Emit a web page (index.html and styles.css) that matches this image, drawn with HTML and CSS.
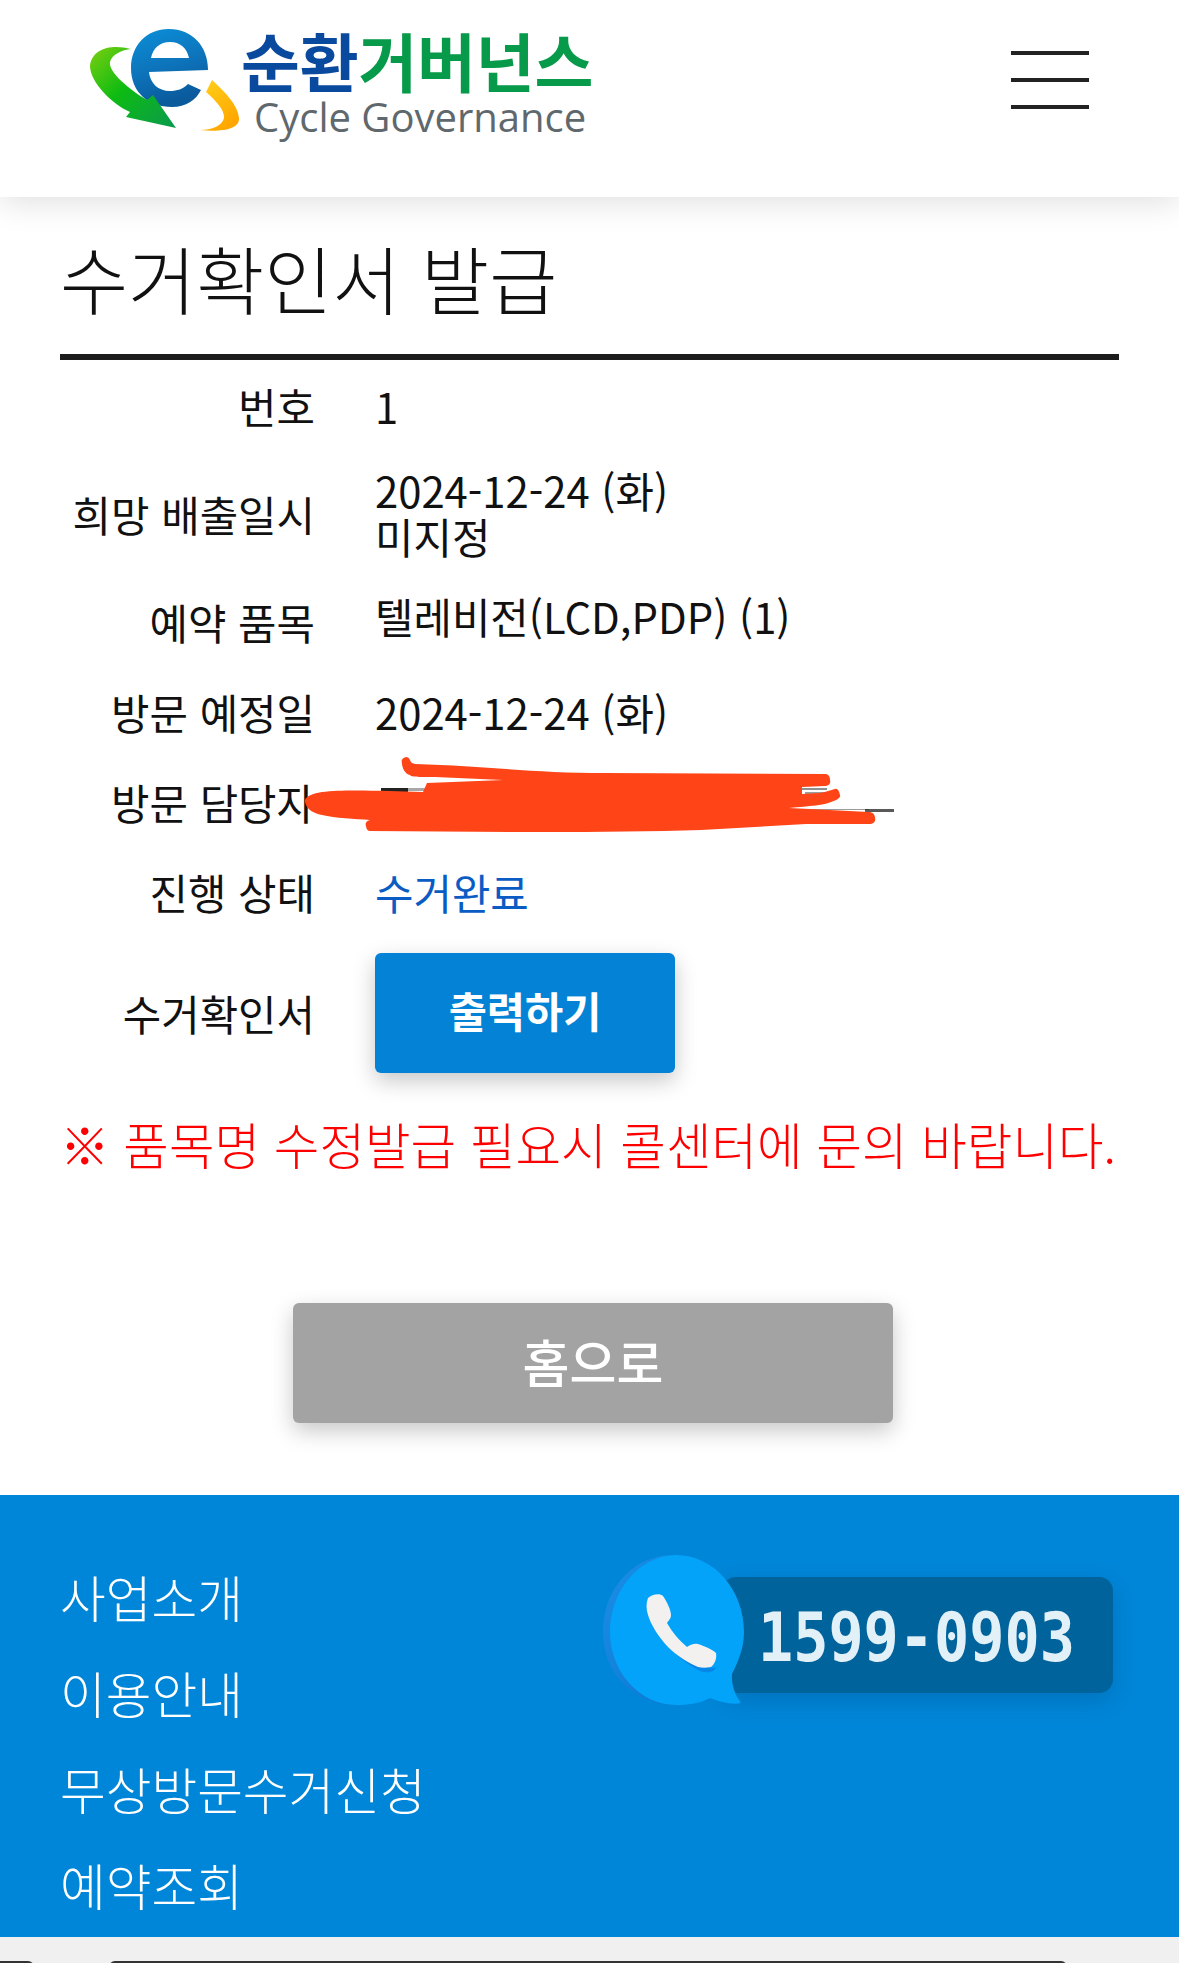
FILE: index.html
```html
<!DOCTYPE html>
<html lang="ko">
<head>
<meta charset="utf-8">
<title>수거확인서 발급</title>
<link rel="stylesheet" href="styles.css">
</head>
<body>
<header class="site-header">
  <div class="logo">
    <svg class="logo-mark" viewBox="85 25 160 110" width="160" height="110" aria-hidden="true">
      <defs>
        <linearGradient id="eBlue" x1="0" y1="0" x2="0.3" y2="1"><stop offset="0" stop-color="#0a8fd8"/><stop offset="0.55" stop-color="#0d74bb"/><stop offset="1" stop-color="#0a5a9c"/></linearGradient>
        <linearGradient id="arrowGreen" x1="0" y1="0" x2="1" y2="1"><stop offset="0" stop-color="#7ccf10"/><stop offset="0.45" stop-color="#0dbb12"/><stop offset="1" stop-color="#0b9a4e"/></linearGradient>
        <linearGradient id="arcYellow" x1="0" y1="0" x2="0.6" y2="1"><stop offset="0" stop-color="#ffd21a"/><stop offset="1" stop-color="#ffa600"/></linearGradient>
      </defs>
      <path fill="url(#eBlue)" fill-rule="evenodd" d="M208 70C208 46 192 29 169 29C146 29 131 46 131 68C131 92 148 107 172 107C186 107 196 100 201 90L188 84C183 89 177 91 170 91C158 91 150 83 149 72ZM151 58C153 48 160 42 170 42C180 42 187 48 189 58Z"/>
      <path fill="url(#arrowGreen)" d="M131 49C112 44 92 48 90 66C90 82 112 104 130 112L126 117L176 128L153 95L147 100C130 90 108 72 110 62C112 54 122 50 131 49Z"/>
      <path fill="url(#arcYellow)" d="M212 80C225 92 238 105 239 118C240 130 220 132 200 130C212 130 222 126 224 118C225 110 215 100 206 92Z"/>
    </svg>
    <div class="logo-text">
      <div class="logo-ko"><span class="logo-blue">순환</span><span class="logo-green">거버넌스</span></div>
      <div class="logo-en">Cycle Governance</div>
    </div>
  </div>
  <button class="menu-btn" aria-label="메뉴"><span></span><span></span><span></span></button>
</header>

<main class="content">
  <h1 class="page-title">수거확인서 발급</h1>
  <div class="details">
    <div class="row"><div class="label">번호</div><div class="value">1</div></div>
    <div class="row row-tall"><div class="label">희망 배출일시</div><div class="value value-tall">2024-12-24 (화)<br>미지정</div></div>
    <div class="row row-item"><div class="label">예약 품목</div><div class="value value-up">텔레비전(LCD,PDP) (1)</div></div>
    <div class="row"><div class="label">방문 예정일</div><div class="value">2024-12-24 (화)</div></div>
    <div class="row"><div class="label">방문 담당자</div><div class="value"></div></div>
    <div class="row"><div class="label">진행 상태</div><div class="value status">수거완료</div></div>
    <div class="row row-button"><div class="label">수거확인서</div><div class="value"><button class="print-btn">출력하기</button></div></div>
    <svg class="scribble" viewBox="0 0 620 90" width="620" height="90" aria-hidden="true">
      <g fill="#222">
        <rect x="76" y="38" width="27" height="4"/>
        <rect x="103" y="38" width="17" height="3" opacity=".4"/>
        <rect x="497" y="38" width="25" height="2" opacity=".5"/>
        <rect x="500" y="42" width="24" height="2" opacity=".45"/>
        <rect x="484" y="59" width="80" height="1" opacity=".45"/>
        <rect x="560" y="59" width="29" height="3" opacity=".75"/>
      </g>
      <path fill="#ff4517" d="M101 7C97 8 96 11 97 13C97 18 100 24 105 25C106 27 112 27 130 27L198 30L122 33L118 42C80 41 40 39 17 42C4 44 -1 48 0 52C2 60 8 63 17 65C30 68 50 69 65 70C61 71 60 74 61 76C61 79 63 81 65 81C180 82 300 83 396 80L501 74L564 74C569 74 571 71 570 68C570 64 567 62 564 62L484 58C505 56 520 55 526 52C533 50 536 47 535 45C534 40 532 38 530 39C525 40 522 42 515 43L497 44L497 37L520 36C524 36 526 33 525 30C525 26 523 24 520 24L300 23C227 23 180 16 110 14C106 13 106 12 105 10C104 8 103 7 101 7Z"/>
    </svg>
  </div>
  <p class="notice">※ 품목명 수정발급 필요시 콜센터에 문의 바랍니다.</p>
  <div class="home-wrap"><button class="home-btn">홈으로</button></div>
</main>

<footer class="site-footer">
  <nav class="footer-links">
    <a>사업소개</a>
    <a>이용안내</a>
    <a>무상방문수거신청</a>
    <a>예약조회</a>
  </nav>
  <div class="call">
    <div class="call-bar"><span class="call-number">1599-0903</span></div>
    <svg class="call-bubble" viewBox="600 1552 148 156" width="148" height="156" aria-hidden="true">
      <defs>
        <linearGradient id="rim" x1="0" y1="0" x2="1" y2="1"><stop offset="0" stop-color="#1b8fe6"/><stop offset="1" stop-color="#0a74d0"/></linearGradient>
      </defs>
      <path fill="url(#rim)" d="M672 1555C636 1555 603 1586 603 1632C603 1676 636 1705 676 1705C690 1705 700 1700 708 1697Z"/>
      <path fill="#03a3fa" d="M676 1555C714 1555 744 1590 744 1632C744 1648 738 1662 732 1674C731 1686 736 1696 741 1703C732 1705 720 1702 710 1698C698 1704 688 1705 676 1705C640 1705 610 1672 610 1632C610 1590 640 1555 676 1555Z"/>
      <path fill="#0a6fd6" opacity=".55" d="M650 1606C652 1628 668 1654 700 1671C708 1674 716 1672 718 1664L716 1668C700 1668 662 1650 650 1606Z"/>
      <path fill="#f2f1f0" d="M648 1598C652 1594 660 1593 663 1596C667 1602 671 1610 671 1615C671 1619 668 1621 667 1623C672 1632 680 1641 687 1647C690 1645 694 1643 698 1644C704 1646 712 1649 716 1653C717 1658 715 1664 711 1667C706 1668 702 1668 698 1667C688 1663 676 1655 668 1647C658 1636 651 1625 648 1615C646 1609 646 1603 648 1598Z"/>
    </svg>
  </div>
</footer>

<div class="bottom-strip"><span class="pill pill-left"></span><span class="pill pill-main"></span></div>
</body>
</html>
```

FILE: styles.css
```css
* { box-sizing: border-box; }
html, body { margin: 0; padding: 0; }
body {
  width: 1179px;
  height: 1963px;
  overflow: hidden;
  background: #fff;
  color: #111;
  font-family: "Noto Sans CJK KR", "Noto Sans", sans-serif;
}

.site-header {
  height: 197px;
  display: flex;
  justify-content: space-between;
  align-items: flex-start;
  padding: 25px 90px 0 85px;
  background: #fff;
  box-shadow: 0 6px 30px rgba(0,0,0,.12);
  position: relative;
}
.logo { display: flex; align-items: flex-start; }
.logo-mark { display: block; flex: none; }
.logo-text { margin-left: -4px; margin-top: -2px; }
.logo-ko {
  font-size: 64px;
  font-weight: 700;
  line-height: 72px;
  white-space: nowrap;
  letter-spacing: -.2px;
}
.logo-blue { color: #0a4a9e; }
.logo-green { color: #079a4a; }
.logo-en {
  font-family: "Open Sans", sans-serif;
  color: #5f686c;
  font-size: 40px;
  line-height: 44px;
  margin-left: 13px;
  white-space: nowrap;
}
.menu-btn {
  width: 78px;
  height: 58px;
  margin-top: 26px;
  padding: 0;
  border: 0;
  background: none;
  display: flex;
  flex-direction: column;
  justify-content: space-between;
}
.menu-btn span { display: block; height: 4px; background: #222; }

.content { padding: 0 60px; }
.page-title {
  margin: 0;
  height: 163px;
  padding-top: 25px;
  font-size: 74px;
  line-height: 110px;
  font-weight: 300;
  color: #111;
  border-bottom: 6px solid #1c1c1c;
  white-space: nowrap;
}
.details { position: relative; padding-top: 1px; }
.row {
  display: grid;
  grid-template-columns: 255px 1fr;
  column-gap: 60px;
  align-items: center;
  min-height: 90px;
  font-size: 41.8px;
  line-height: 46px;
}
.row-tall { min-height: 126px; }
.row-item { min-height: 90px; }
.row-button { min-height: 151px; }
.label { text-align: right; white-space: nowrap; }
.value { white-space: nowrap; }
.value-tall { margin-top: -2px; }
.value-up { margin-top: -12px; }
.status { color: #0a5cc4; }
.print-btn {
  display: block;
  width: 300px;
  height: 120px;
  padding: 0 0 6px;
  border: 0;
  border-radius: 6px;
  background: #0382d6;
  color: #fff;
  font: 700 41.5px "Noto Sans CJK KR", sans-serif;
  box-shadow: 0 8px 22px rgba(0,0,0,.22);
}
.scribble { position: absolute; left: 245px; top: 390px; }

.notice {
  margin: 11px 0 0;
  font-size: 49.5px;
  line-height: 90px;
  color: #f00;
  white-space: nowrap;
  font-weight: 300;
}
.home-wrap { display: flex; justify-content: center; margin-top: 114px; }
.home-btn {
  width: 600px;
  height: 120px;
  margin-left: 7px;
  padding: 0 0 4px;
  border: 0;
  border-radius: 6px;
  background: #a3a3a3;
  color: #fff;
  font: 500 51px "Noto Sans CJK KR", sans-serif;
  box-shadow: 0 8px 22px rgba(0,0,0,.22);
}

.site-footer {
  position: absolute;
  left: 0;
  top: 1495px;
  width: 1179px;
  height: 442px;
  background: #0086d8;
  display: flex;
  justify-content: space-between;
  align-items: flex-start;
  padding: 53px 66px 0 60px;
}
.footer-links { display: flex; flex-direction: column; }
.footer-links a {
  color: #fff;
  font-size: 49.7px;
  line-height: 96px;
  font-weight: 300;
  white-space: nowrap;
}
.call { position: relative; width: 511px; height: 150px; margin-top: 7px; }
.call-bar {
  position: absolute;
  left: 120px;
  right: 0;
  top: 22px;
  height: 116px;
  background: #00639c;
  border-radius: 14px;
  box-shadow: 0 8px 22px rgba(0,60,110,.25);
}
.call-number {
  position: absolute;
  left: 36px;
  top: 18px;
  font-family: "DejaVu Sans Mono", monospace;
  font-weight: 700;
  font-size: 68px;
  line-height: 86px;
  color: #e2f0f8;
  transform: scaleX(.86);
  transform-origin: left center;
  white-space: nowrap;
}
.call-bubble { position: absolute; left: -2px; top: -3px; }

.bottom-strip {
  position: absolute;
  left: 0;
  top: 1937px;
  width: 1179px;
  height: 26px;
  background: #f0f0f0;
}
.pill { position: absolute; top: 24px; height: 6px; background: #333; }
.pill-left { left: -10px; width: 44px; border-radius: 0 12px 0 0; }
.pill-main { left: 109px; width: 958px; border-radius: 12px 12px 0 0; }
```
